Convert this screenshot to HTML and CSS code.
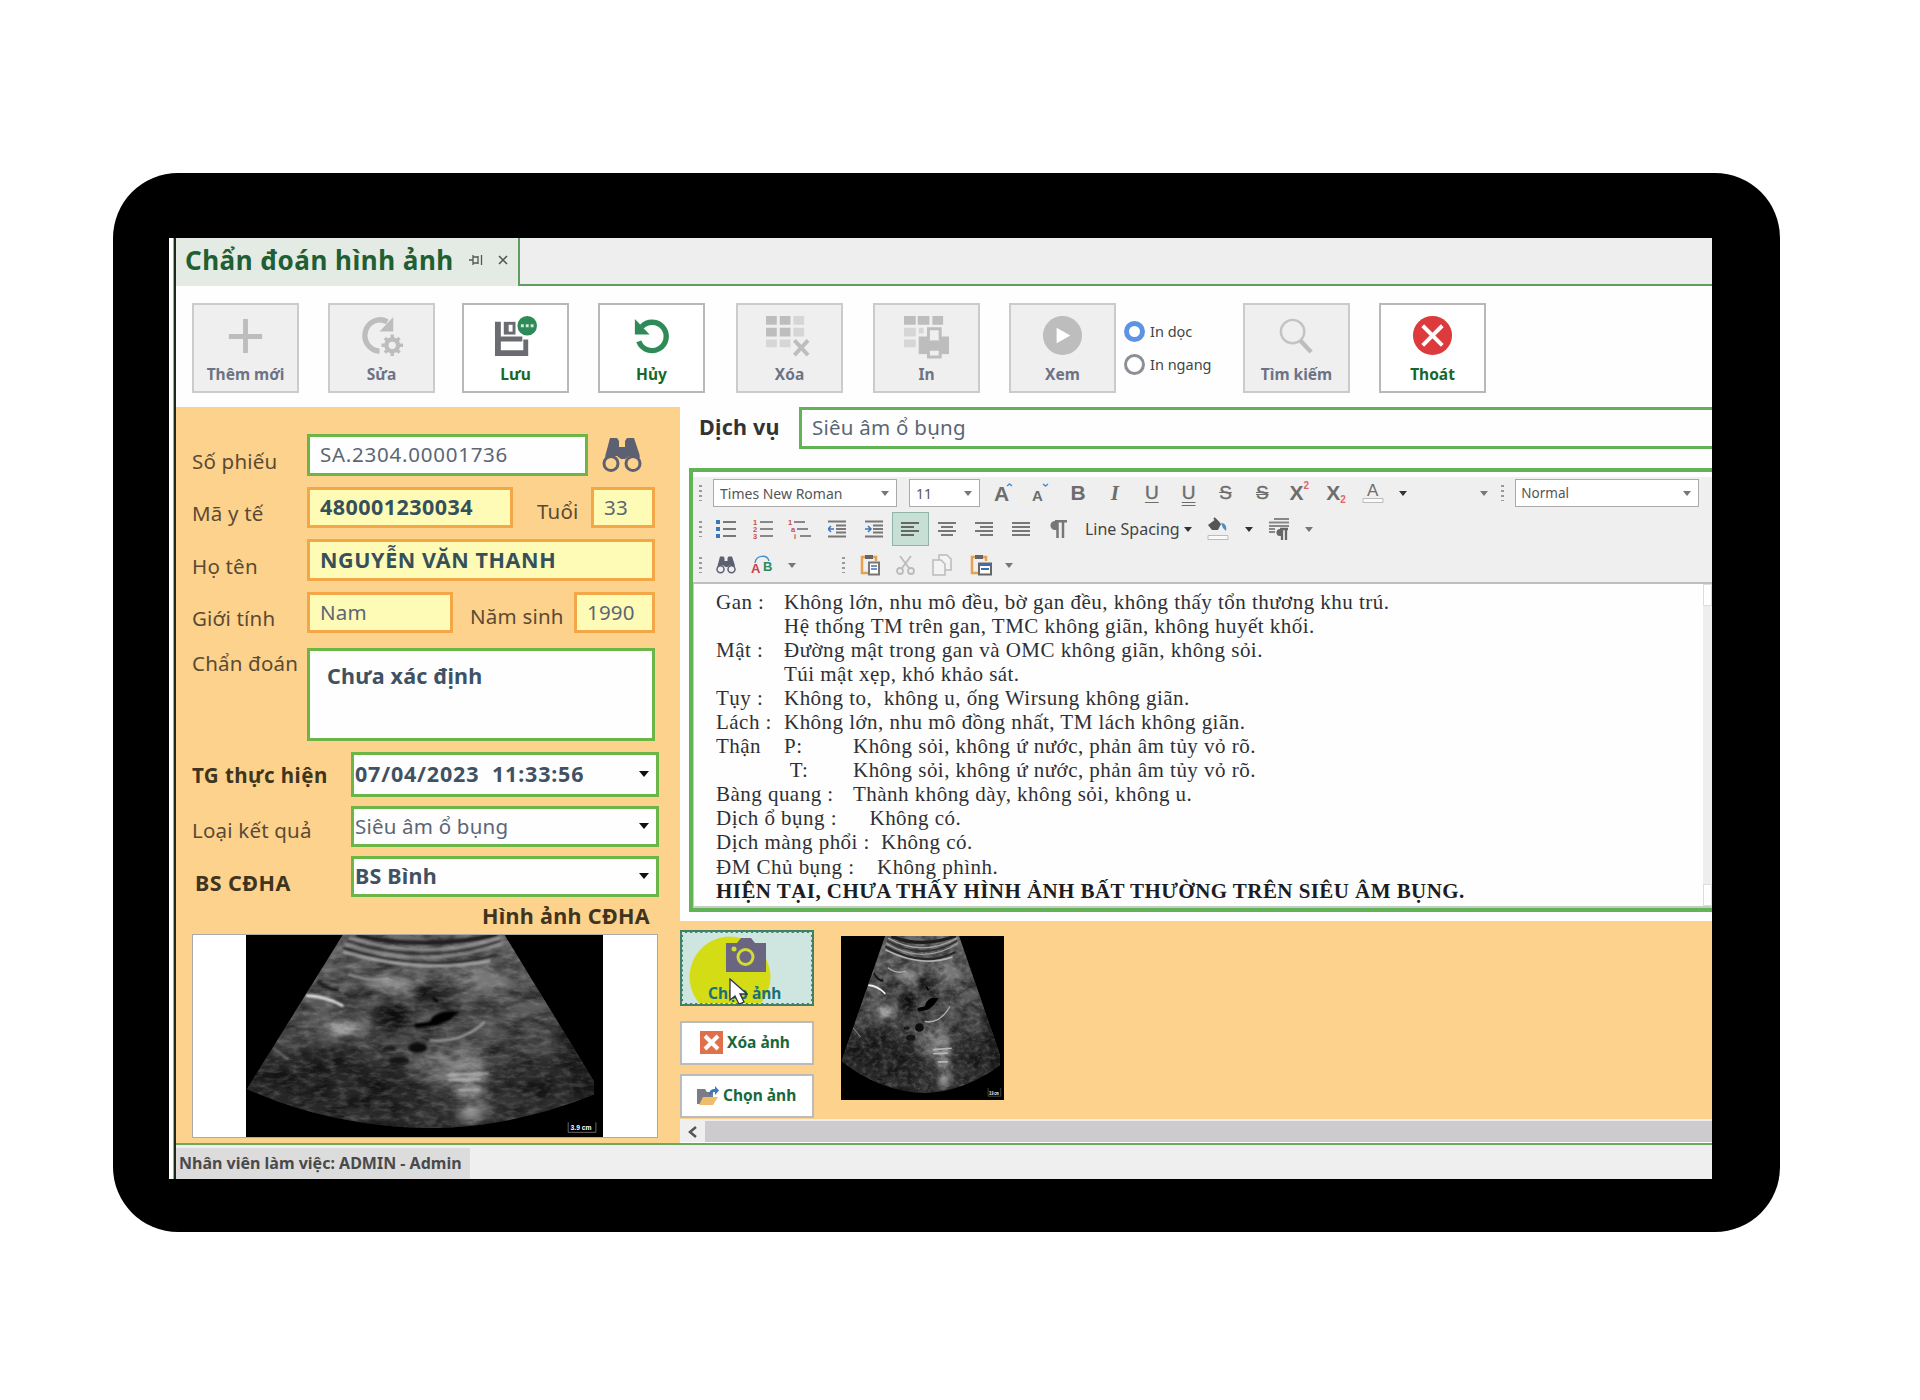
FILE: index.html
```html
<!DOCTYPE html>
<html lang="vi">
<head>
<meta charset="utf-8">
<title>Chẩn đoán hình ảnh</title>
<link rel="stylesheet" href="styles.css">
</head>
<body>
<svg class="defs" width="0" height="0">
  <defs>
    <filter id="soft" x="-50%" y="-50%" width="200%" height="200%"><feGaussianBlur stdDeviation="16"/></filter>
    <filter id="fine" x="-20%" y="-50%" width="140%" height="200%"><feGaussianBlur stdDeviation="2.500"/></filter>
    <filter id="speckle" x="0" y="0" width="100%" height="100%">
      <feTurbulence type="fractalNoise" baseFrequency="0.03 0.07" numOctaves="4" seed="8"/>
      <feColorMatrix values="0 0 0 0 0.6  0 0 0 0 0.6  0 0 0 0 0.6  2.4 0 0 0 -1"/>
    </filter>
    <filter id="shade" x="0" y="0" width="100%" height="100%">
      <feTurbulence type="fractalNoise" baseFrequency="0.012 0.025" numOctaves="4" seed="21"/>
      <feColorMatrix values="0 0 0 0 0  0 0 0 0 0  0 0 0 0 0  0 2.6 0 0 -1"/>
    </filter>
    <linearGradient id="depth" x1="0" y1="0" x2="0" y2="1">
      <stop offset="0" stop-color="#6a6a6a"/><stop offset=".45" stop-color="#545454"/><stop offset=".7" stop-color="#3a3a3a"/><stop offset="1" stop-color="#303030"/>
    </linearGradient>
    <clipPath id="fan"><path d="M286 0 L3 462 Q250 575 540 580 Q790 578 1030 478 L1030 440 L765 0Z"/></clipPath>
    <symbol id="scan" viewBox="0 0 1056 606" preserveAspectRatio="none">
      <rect width="1056" height="606" fill="#000"/>
      <g clip-path="url(#fan)">
        <rect width="1056" height="606" fill="url(#depth)"/>
        <g filter="url(#soft)">
          <ellipse cx="200" cy="440" rx="220" ry="100" fill="#262626"/>
          <ellipse cx="420" cy="470" rx="100" ry="90" fill="#262626"/>
          <ellipse cx="430" cy="150" rx="65" ry="32" fill="#8a8a8a"/>
          <ellipse cx="690" cy="130" rx="90" ry="40" fill="#777"/>
          <ellipse cx="430" cy="240" rx="60" ry="48" fill="#181818"/>
          <ellipse cx="560" cy="175" rx="80" ry="26" fill="#232323"/>
          <ellipse cx="350" cy="170" rx="30" ry="22" fill="#333"/>
          <ellipse cx="285" cy="282" rx="62" ry="22" fill="#b4b4b4"/>
          <ellipse cx="600" cy="390" rx="110" ry="60" fill="#7c7c7c"/>
          <ellipse cx="665" cy="470" rx="48" ry="95" fill="#929292"/>
          <ellipse cx="900" cy="440" rx="140" ry="80" fill="#2c2c2c"/>
          <ellipse cx="850" cy="240" rx="80" ry="60" fill="#5c5c5c"/>
          <path d="M880 60 L1060 480 L960 500Z" fill="#1c1c1c"/>
        </g>
        <rect width="1056" height="606" filter="url(#shade)" opacity=".5"/>
        <rect width="1056" height="606" filter="url(#speckle)" opacity=".22"/>
        <g filter="url(#fine)" fill="none" stroke-linecap="round">
          <path d="M330 2 Q530 46 740 0" stroke="#1c1c1c" stroke-width="12"/>
          <path d="M305 8 Q530 80 750 8" stroke="#a5a5a5" stroke-width="5"/>
          <path d="M300 18 Q530 94 752 18" stroke="#303030" stroke-width="6"/>
          <path d="M295 28 Q530 108 755 28" stroke="#a0a0a0" stroke-width="5"/>
          <path d="M290 40 Q530 120 740 60" stroke="#252525" stroke-width="8"/>
          <path d="M290 52 Q520 118 720 78" stroke="#b5b5b5" stroke-width="6"/>
          <path d="M305 118 Q360 142 420 130" stroke="#aaa" stroke-width="5"/>
          <path d="M180 182 Q240 185 285 212" stroke="#eee" stroke-width="8"/>
          <path d="M215 140 Q240 165 270 165" stroke="#181818" stroke-width="10"/>
          <path d="M545 316 Q640 325 705 262" stroke="#aaa" stroke-width="6"/>
          <path d="M600 420 L715 415 M600 435 L690 433 M630 465 L690 465" stroke="#b8b8b8" stroke-width="6"/>
          <path d="M500 268 L545 262 Q560 225 625 232 L600 254 L560 270 L505 276Z" fill="#000" stroke="#000" stroke-width="5"/>
          <path d="M555 190 l10 8" stroke="#000" stroke-width="9"/>
          <ellipse cx="508" cy="338" rx="28" ry="16" fill="#0a0a0a"/>
          <ellipse cx="452" cy="376" rx="30" ry="11" fill="#121212"/>
          <ellipse cx="425" cy="340" rx="20" ry="6" fill="#181818"/>
          <path d="M80 340 L125 372" stroke="#8a8a8a" stroke-width="4"/>
        </g>
      </g>
      <path d="M953 562v30h82v-30" fill="none" stroke="#999" stroke-width="2"/>
      <text x="960" y="586" class="scan-scale">3.9 cm</text>
    </symbol>
    <symbol id="binoc" viewBox="0 0 40 36">
      <path d="M8 1h7l2 3v6h6V4l2-3h7l5 15c1 3 1 4 0 6l-5-3h-5l-4 3h-4l-4-3H9l-5 4c-1-2-1-4 0-7z" fill="#5d6070"/>
      <circle cx="9" cy="26.500" r="7" fill="none" stroke="#5d6070" stroke-width="3"/>
      <circle cx="31" cy="26.500" r="7" fill="none" stroke="#5d6070" stroke-width="3"/>
    </symbol>
  </defs>
</svg>
<div class="tablet">
<div class="screen">
  <div class="edge"></div>
  <div class="app">
    <header class="tabs">
      <div class="tab"><span class="tab-title">Chẩn đoán hình ảnh</span>
        <svg width="14" height="12" viewBox="0 0 14 12" fill="none" stroke="#555" stroke-width="1.300"><path d="M0 6h4M4 1v10M4 3h5v6H4M9 2v8M12.500 1v10"/></svg>
        <svg width="10" height="10" viewBox="0 0 10 10" stroke="#555" stroke-width="1.600"><path d="M1 1l8 8M9 1l-8 8"/></svg>
      </div>
      <div class="tab-rest"></div>
    </header>

    <nav class="tools">
      <button class="tool off"><svg viewBox="0 0 44 44"><path d="M22 4v35M5 22h34" stroke="#bdbdbd" stroke-width="5"/></svg><span>Thêm mới</span></button>
      <button class="tool off t2"><svg viewBox="0 0 44 44"><path d="M28 7A15.500 16 0 1 0 20 37" fill="none" stroke="#bdbdbd" stroke-width="5.500"/><path d="M34 2v15H20z" fill="#bdbdbd"/><circle cx="33" cy="31" r="6" fill="none" stroke="#bdbdbd" stroke-width="4.500"/><path d="M33 20v5M33 37v5M22 31h5M39 31h5M25.500 23.500l3 3M37.500 35.500l3 3M40.500 23.500l-3 3M28.500 35.500l-3 3" stroke="#bdbdbd" stroke-width="3.500"/></svg><span>Sửa</span></button>
      <button class="tool on"><svg viewBox="0 0 44 44"><path d="M1 7h6v15h22v5H7v9h23V25h5v17H1z" fill="#6b6c72"/><path d="M10 7h12v13H10z" fill="#6b6c72"/><path d="M15 10h4v7h-4z" fill="#fff"/><circle cx="34" cy="11" r="11" fill="#fff"/><circle cx="34" cy="11" r="10" fill="#2e8b57"/><path d="M27.500 9.500h3v3h-3zM32.500 9.500h3v3h-3zM37.500 9.500h3v3h-3z" fill="#cfeadb"/></svg><span>Lưu</span></button>
      <button class="tool on t4"><svg viewBox="0 0 44 44"><path d="M12 12A14.500 14.500 0 1 1 9 27" fill="none" stroke="#2e8b57" stroke-width="5.500"/><path d="M5 4v16h15z" fill="#2e8b57"/></svg><span>Hủy</span></button>
      <button class="tool off t5"><svg viewBox="0 0 44 44"><path d="M-2 1H9v9H-2zM12 1h11v9H12zM-2 13H9v9H-2zM12 13h11v9H12z" fill="#bdbdbd"/><path d="M26 1h11v9H26zM26 13h11v9H26zM-2 25H9v8H-2zM12 25h11v8H12z" fill="#d6d6d6"/><path d="M27 26l14 15M41 26L27 41" stroke="#bdbdbd" stroke-width="4"/></svg><span>Xóa</span></button>
      <button class="tool off"><svg viewBox="0 0 44 44"><path d="M-1 1h12v9H-1zM13 1h12v9H13zM28 1h11v9H28z" fill="#bdbdbd"/><path d="M-1 13h12v9H-1zM-1 25h12v8H-1zM14 13h5v6h-5z" fill="#d6d6d6"/><path d="M14 22h31v18H14z" fill="#bdbdbd"/><path d="M24 26V14h12v12" fill="#efefef" stroke="#bdbdbd" stroke-width="3"/><path d="M24 35h12v8H24z" fill="#efefef" stroke="#bdbdbd" stroke-width="3"/></svg><span>In</span></button>
      <button class="tool off t7"><svg viewBox="0 0 44 44"><circle cx="22" cy="21" r="20" fill="#bdbdbd"/><path d="M16 13v16l14-8z" fill="#fff"/></svg><span>Xem</span></button>
      <div class="radios">
        <label><i class="radio checked"></i><span>In dọc</span></label>
        <label><i class="radio"></i><span>In ngang</span></label>
      </div>
      <button class="tool off"><svg viewBox="0 0 44 44"><circle cx="18" cy="17" r="12" fill="none" stroke="#c3c3c3" stroke-width="2.500"/><path d="M26 26l11 12" stroke="#bdbdbd" stroke-width="4.500"/></svg><span>Tìm kiếm</span></button>
      <button class="tool on"><svg viewBox="0 0 44 44"><circle cx="22" cy="21" r="20" fill="#dc3a3c"/><path d="M12 11l20 20M32 11L12 31" stroke="#fff" stroke-width="4"/></svg><span>Thoát</span></button>
    </nav>

    <main class="work">
      <section class="patient">
        <div class="row r1"><label class="lbl"><span>Số phiếu</span></label><div class="box green w281"><span class="code">SA.2304.00001736</span></div><svg class="find" width="40" height="36"><use href="#binoc"/></svg></div>
        <div class="row r2"><label class="lbl"><span>Mã y tế</span></label><div class="box gold b w206"><span class="med">480001230034</span></div><label class="mid m1"><span>Tuổi</span></label><div class="box gold w64"><span>33</span></div></div>
        <div class="row r3"><label class="lbl"><span>Họ tên</span></label><div class="box gold b w348"><span class="name">NGUYỄN VĂN THANH</span></div></div>
        <div class="row r4"><label class="lbl"><span>Giới tính</span></label><div class="box gold w146"><span>Nam</span></div><label class="mid m2"><span>Năm sinh</span></label><div class="box gold w81"><span>1990</span></div></div>
        <div class="row r5"><label class="lbl"><span>Chẩn đoán</span></label><div class="box green note w348"><span>Chưa xác định</span></div></div>
        <div class="row r6"><label class="lbl2 b"><span>TG thực hiện</span></label><div class="box green combo date"><span>07/04/2023&nbsp; 11:33:56</span><i class="caret"></i></div></div>
        <div class="row r7"><label class="lbl2"><span>Loại kết quả</span></label><div class="box green combo"><span>Siêu âm ổ bụng</span><i class="caret"></i></div></div>
        <div class="row r8"><label class="lbl2 b"><span>BS CĐHA</span></label><div class="box green combo bb"><span>BS Bình</span><i class="caret"></i></div></div>
        <div class="caption"><span>Hình ảnh CĐHA</span></div>
        <div class="preview"><svg width="357" height="202"><use href="#scan" width="357" height="202"/></svg></div>
      </section>

      <section class="result">
        <div class="service"><label><span>Dịch vụ</span></label><div class="service-box"><span>Siêu âm ổ bụng</span></div></div>
        <div class="editor">
          <div class="bars">
            <div class="bar bar1">
              <i class="grip"></i>
              <div class="sel"><span>Times New Roman</span><i class="caret sm"></i></div>
              <div class="sel s2"><span>11</span><i class="caret sm"></i></div>
              <div class="g"><svg width="20" height="22"><text x="0" y="19" class="gl">A</text><path d="M13 4l2.500-2 2.500 2" stroke="#4a8ec6" fill="none" stroke-width="1.500"/></svg></div>
              <div class="g"><svg width="18" height="22"><text x="0" y="19" class="gl sml">A</text><path d="M11 2l2.500 2 2.500-2" stroke="#4a8ec6" fill="none" stroke-width="1.500"/></svg></div>
              <div class="g gl">B</div>
              <div class="g gl it">I</div>
              <div class="g gl rg un">U</div>
              <div class="g gl rg un dbl">U</div>
              <div class="g gl rg st">S</div>
              <div class="g gl rg st dbl2">S</div>
              <div class="g gl xx">X<sup>2</sup></div>
              <div class="g gl xx">X<sub>2</sub></div>
              <div class="g"><svg width="22" height="24"><text x="5" y="15" class="gl fc">A</text><path d="M1 17.500h20v4H1z" fill="#fafafa" stroke="#bbb"/></svg></div>
              <div class="g"><i class="caret sm dk"></i></div>
              <div class="g end"><i class="caret sm"></i></div>
              <i class="grip"></i>
              <div class="sel s3"><span>Normal</span><i class="caret sm"></i></div>
            </div>
            <div class="bar bar2">
              <i class="grip"></i>
              <div class="g"><svg width="20" height="18"><path d="M0 2h4M0 9h4M0 16h4" stroke="#3c78b8" stroke-width="4"/><path d="M7 2h13M7 9h13M7 16h13" stroke="#777" stroke-width="2"/></svg></div>
              <div class="g"><svg width="20" height="20"><text x="0" y="6" class="nm">1</text><text x="0" y="13" class="nm">2</text><text x="0" y="20" class="nm">3</text><path d="M7 3h13M7 10h13M7 17h13" stroke="#888" stroke-width="2"/></svg></div>
              <div class="g"><svg width="23" height="20"><text x="0" y="6" class="nm">1</text><text x="3" y="13" class="nm">a</text><text x="6" y="20" class="nm">i</text><path d="M6 3h11M9 10h11M12 17h11" stroke="#888" stroke-width="2"/></svg></div>
              <div class="g"><svg width="18" height="18"><path d="M0 1.500h18M8 5.500h10M8 9h10M8 12.500h10M0 16.500h18" stroke="#777" stroke-width="2"/><path d="M0 9h6M3 6L0 9l3 3" stroke="#3c78b8" stroke-width="1.500" fill="none"/></svg></div>
              <div class="g"><svg width="18" height="18"><path d="M0 1.500h18M8 5.500h10M8 9h10M8 12.500h10M0 16.500h18" stroke="#777" stroke-width="2"/><path d="M0 9h6M3 6l3 3-3 3" stroke="#3c78b8" stroke-width="1.500" fill="none"/></svg></div>
              <div class="g act"><svg width="18" height="14"><path d="M0 1h18M0 5h13M0 9h18M0 13h13" stroke="#666" stroke-width="2"/></svg></div>
              <div class="g"><svg width="18" height="14"><path d="M0 1h18M3 5h12M0 9h18M3 13h12" stroke="#777" stroke-width="2"/></svg></div>
              <div class="g"><svg width="18" height="14"><path d="M0 1h18M5 5h13M0 9h18M5 13h13" stroke="#777" stroke-width="2"/></svg></div>
              <div class="g"><svg width="18" height="14"><path d="M0 1h18M0 5h18M0 9h18M0 13h18" stroke="#777" stroke-width="2"/></svg></div>
              <div class="g"><svg width="18" height="18"><path d="M8 1h-2a4.500 4.500 0 0 0 0 9h2z" fill="#777"/><path d="M18 1.200H6M8.500 1v17M14 1v17" fill="none" stroke="#777" stroke-width="2.500"/></svg></div>
              <div class="ls"><span>Line Spacing</span><i class="caret sm dk"></i></div>
              <div class="g"><svg width="22" height="24"><path d="M1 8l8-6 5 5-3 6H5z" fill="#555"/><path d="M7 1l5 5" stroke="#555" stroke-width="2"/><path d="M14 6c4 0 6 3 5 8l-3-3z" fill="#4a8ec6"/><path d="M1 18.500h20v4H1z" fill="#fafafa" stroke="#bbb"/></svg></div>
              <div class="g"><i class="caret sm dk"></i></div>
              <div class="g"><svg width="20" height="22"><path d="M5 1h15M0 4.500h20M0 8h20M0 11h6M0 14h6" stroke="#888" stroke-width="2"/><path d="M13 11h-2a3.500 3.500 0 0 0 0 7h2z" fill="#666"/><path d="M19 11h-8M13 11v11M17 11v11" fill="none" stroke="#666" stroke-width="2.300"/></svg></div>
              <div class="g"><i class="caret sm"></i></div>
            </div>
            <div class="bar bar3">
              <i class="grip"></i>
              <div class="g"><svg width="20" height="18"><use href="#binoc"/></svg></div>
              <div class="g"><svg width="22" height="20"><text x="0" y="18" class="ab ra">A</text><text x="12" y="16" class="ab gb">B</text><path d="M4 8c1-8 12-9 14-2" fill="none" stroke="#4a8ec6" stroke-width="1.500"/></svg></div>
              <div class="g"><i class="caret sm"></i></div>
              <i class="grip"></i>
              <div class="g"><svg width="20" height="22"><path d="M8 19H2V3h14v4" fill="none" stroke="#e8a04a" stroke-width="2.500"/><path d="M5 1h8v4H5z" fill="#666"/><path d="M9 8.500h10v12H9z" fill="#fff" stroke="#777" stroke-width="2"/><path d="M11 12h6M11 15h6" stroke="#4a6ea6" stroke-width="1.500"/></svg></div>
              <div class="g"><svg width="20" height="20" fill="none" stroke="#bbb" stroke-width="1.800"><circle cx="4" cy="16" r="3"/><circle cx="15" cy="16" r="3"/><path d="M6 13L15 1M13 13L4 1"/></svg></div>
              <div class="g"><svg width="20" height="22" fill="#f3f3f3" stroke="#bbb" stroke-width="1.500"><path d="M7 1h8l4 4v11H7z"/><path d="M1 6h8l4 4v11H1z"/></svg></div>
              <div class="g"><svg width="22" height="22"><path d="M8 19H2V3h14v4" fill="none" stroke="#e8a04a" stroke-width="2.500"/><path d="M5 1h8v4H5z" fill="#666"/><path d="M9 9.500h12v11H9z" fill="#fff" stroke="#666" stroke-width="2"/><path d="M9 11h12M11 15h8" stroke="#3f6ea8" stroke-width="2"/></svg></div>
              <div class="g"><i class="caret sm"></i></div>
            </div>
          </div>
          <div class="page">
            <div class="text">
              <p><span class="c1">Gan :</span>Không lớn, nhu mô đều, bờ gan đều, không thấy tổn thương khu trú.</p>
              <p><span class="c1"></span>Hệ thống TM trên gan, TMC không giãn, không huyết khối.</p>
              <p><span class="c1">Mật :</span>Đường mật trong gan và OMC không giãn, không sỏi.</p>
              <p><span class="c1"></span>Túi mật xẹp, khó khảo sát.</p>
              <p><span class="c1">Tụy :</span>Không to,&nbsp; không u, ống Wirsung không giãn.</p>
              <p><span class="c1">Lách :</span>Không lớn, nhu mô đồng nhất, TM lách không giãn.</p>
              <p><span class="c1">Thận</span><span class="c2">P:</span>Không sỏi, không ứ nước, phản âm tủy vỏ rõ.</p>
              <p><span class="c1"></span><span class="c2">&nbsp;T:</span>Không sỏi, không ứ nước, phản âm tủy vỏ rõ.</p>
              <p><span class="c3">Bàng quang :</span>Thành không dày, không sỏi, không u.</p>
              <p><span class="c4">Dịch ổ bụng :</span>Không có.</p>
              <p><span class="c5">Dịch màng phổi :</span>Không có.</p>
              <p><span class="c6">ĐM Chủ bụng :</span>Không phình.</p>
              <p class="concl">HIỆN TẠI, CHƯA THẤY HÌNH ẢNH BẤT THƯỜNG TRÊN SIÊU ÂM BỤNG.</p>
            </div>
            <div class="vscroll"><i></i><i></i></div>
          </div>
        </div>
        <div class="gallery">
          <div class="acts">
            <button class="shoot">
              <i class="halo"></i>
              <svg class="cam" width="41" height="34"><path d="M1 5h11l4-5h10l4 5h11v29H1z" fill="#6a6580"/><circle cx="20.500" cy="19" r="7.500" fill="none" stroke="#d3dc30" stroke-width="3"/><circle cx="9" cy="11" r="2.500" fill="#d3dc30"/></svg>
              <span>Chụp ảnh</span>
              <svg class="pointer" width="19" height="28"><path d="M1 1v21l5-4 4 8 5-2-4-8h7z" fill="#fff" stroke="#334" stroke-width="1.300"/></svg>
            </button>
            <button class="act-btn del"><svg width="23" height="23"><path d="M0 0h23v23H0z" fill="#e0704c"/><path d="M5 5l13 13M18 5L5 18" stroke="#fff" stroke-width="4"/></svg><span>Xóa ảnh</span></button>
            <button class="act-btn pick"><svg width="22" height="21"><path d="M0 4h8l2 3h6v12H0z" fill="#7b7c85"/><path d="M6 12h15l-5 8H2z" fill="#edbd6c"/><path d="M12 10c0-5 3-6 6-6V1l4 4.500L18 10V7c-3 0-4 1-4 3z" fill="#3c78c0"/></svg><span>Chọn ảnh</span></button>
          </div>
          <svg class="thumb" width="163" height="164"><use href="#scan" width="163" height="164"/></svg>
        </div>
        <div class="hscroll"><i><svg width="9" height="12"><path d="M8 1L2 6l6 5" fill="none" stroke="#555" stroke-width="2.500"/></svg></i></div>
      </section>
    </main>
    <footer class="status"><span class="who">Nhân viên làm việc: ADMIN - Admin</span></footer>
  </div>
</div>
</div>
</body>
</html>
```
FILE: styles.css
```css
* { box-sizing: border-box; }
body { margin: 0; width: 1920px; height: 1400px; overflow: hidden; background: #fff; font-family: "Noto Sans", "Open Sans", sans-serif; padding: 173px 0 0 113px; }
button { font: inherit; padding: 0; margin: 0; }
svg { display: block; flex: none; }
.defs { position: absolute; }
.b, .b span { font-weight: 700; }

.tablet { width: 1667px; height: 1059px; background: #000; border-radius: 65px; padding: 65px 68px 53px 56px; }
.screen { width: 1543px; height: 941px; background: #fff; display: flex; overflow: hidden; }
.edge { width: 7px; flex: none; background: linear-gradient(90deg, #fff 4px, #7ec46e 4px, #7ec46e 5px, #1d2b1d 5px); }
.app { flex: 1; min-width: 0; display: flex; flex-direction: column; }

.tabs { display: flex; height: 48px; flex: none; }
.tab { width: 344px; background: #e4ebe4; border-right: 2px solid #5f9e5f; display: flex; align-items: center; padding: 0 0 4px 9px; }
.tab svg:first-of-type { margin-left: 15px; }
.tab svg + svg { margin-left: 15px; }
.tab-title { font-size: 26px; line-height: 34px; font-weight: 700; color: #1f5f33; white-space: nowrap; letter-spacing: .5px; }
.tab-rest { flex: 1; background: #eee; border-bottom: 2px solid #5f9e5f; }

.tools { display: flex; height: 121px; flex: none; padding: 17px 0 0 16px; background: #fefefe; }
.tool { width: 107px; height: 90px; border: 2px solid #cbcbcb; display: flex; flex-direction: column; align-items: center; padding-top: 10px; margin-right: 29px; flex: none; border-radius: 0; }
.t2 { margin-right: 27px; }
.t4 { margin-right: 31px; }
.t5 { margin-right: 30px; }
.t7 { margin-right: 8px; }
.tool svg { width: 43px; height: 43px; overflow: visible; }
.tool span { font-size: 15.500px; line-height: 22px; font-weight: 700; margin-top: 5px; white-space: nowrap; }
.tool.off { background: #efefef; color: #6d7384; }
.tool.on { background: #fff; color: #15682a; border-color: #b8b8b8; }
.radios { width: 119px; padding-top: 17px; flex: none; }
.radios label { display: flex; align-items: center; height: 22px; margin-bottom: 11px; font-size: 14.500px; gap: 5px; color: #444; white-space: nowrap; }
.radio { width: 21px; height: 21px; border: 3px solid #8b8f96; border-radius: 50%; background: #fff; flex: none; }
.radio.checked { border: 5px solid #5d93e4; }

.work { display: flex; flex: 1; min-height: 0; }
.patient { width: 504px; flex: none; background: #fdd28c; padding: 27px 0 0 16px; color: #5a4a33; font-size: 20.500px; letter-spacing: .2px; }
.row { display: flex; align-items: center; }
.row span, .caption span { white-space: nowrap; }
.r1 { height: 42px; margin-bottom: 11px; }
.r2 { height: 41px; margin-bottom: 11px; }
.r3 { height: 42px; margin-bottom: 11px; }
.r4 { height: 41px; margin-bottom: 15px; }
.r5 { height: 93px; margin-bottom: 11px; align-items: flex-start; }
.r6 { height: 45px; margin-bottom: 9px; }
.r7 { height: 41px; margin-bottom: 9px; }
.r8 { height: 41px; }
.lbl { width: 115px; padding-top: 11px; flex: none; }
.r5 .lbl { padding-top: 1px; }
.lbl2 { width: 159px; flex: none; }
.lbl2.b { color: #40341f; letter-spacing: .45px; }
.r7 .lbl2 { padding-top: 7px; }
.r8 .lbl2 { padding: 12px 0 0 3px; font-size: 21.500px; }
.mid { padding-top: 7px; flex: none; }
.m1 { width: 78px; padding-left: 24px; }
.m2 { width: 121px; padding-left: 17px; }
.box { height: 100%; display: flex; align-items: center; border: 3px solid #6cb548; background: #fefefe; padding: 0 0 2px 10px; color: #5b6675; flex: none; }
.box.b, .box.bb, .note, .date { font-size: 21.500px; font-weight: 700; color: #3f5264; }
.box.gold { border-color: #f4a747; background: #fefbb6; }
.box.gold.b { color: #35505a; }
.code { letter-spacing: .75px; }
.med { letter-spacing: .45px; }
.name { letter-spacing: .6px; }
.date span { letter-spacing: .8px; }
.w281 { width: 281px; } .w206 { width: 206px; } .w64 { width: 64px; } .w348 { width: 348px; } .w146 { width: 146px; } .w81 { width: 81px; }
.note { align-items: flex-start; padding: 10px 0 0 17px; }
.combo { width: 308px; padding-left: 1px; justify-content: space-between; padding-right: 7px; }
.find { margin-left: 14px; }
.caret { border: 5.500px solid transparent; border-top: 6px solid #111; border-bottom: 0; flex: none; }
.caret.sm { border-width: 4px; border-top: 5px solid #777; border-bottom: 0; }
.caret.sm.dk { border-top-color: #333; }
.caption { height: 37px; width: 458px; text-align: right; font-size: 21.500px; letter-spacing: .33px; font-weight: 700; color: #40341f; line-height: 37px; }
.preview { width: 466px; height: 204px; background: #fff; border: 1px solid #aaa; padding-left: 53px; }
.scan-scale { font: bold 20px "Liberation Sans", sans-serif; fill: #fff; letter-spacing: 0; }

.result { flex: 1; min-width: 0; display: flex; flex-direction: column; background: #fefefe; }
.service { display: flex; height: 42px; flex: none; font-size: 20.500px; letter-spacing: .25px; }
.service label { width: 119px; padding-left: 19px; font-size: 21.500px; font-weight: 700; color: #333; line-height: 40px; white-space: nowrap; }
.service-box { flex: 1; border: 3px solid #62b355; border-right: 0; padding-left: 10px; line-height: 34px; color: #5b6675; }
.editor { margin: 19px 0 0 9px; height: 444px; flex: none; border: 4px solid #62b355; border-right: 0; padding-top: 5px; display: flex; flex-direction: column; }
.bars { background: #efefef; height: 107px; flex: none; padding-top: 2px; border-bottom: 2px solid #bfbfbf; }
.bar { display: grid; align-items: center; height: 36px; }
.bar1 { height: 28px; margin-bottom: 5px; grid-template-columns: 20px 184px 12px 71px 6px repeat(11, 36.850px) 24px 80px 20px 184px; }
.bar1 .sel { grid-column: 2; }
.bar1 .s2 { grid-column: 4; }
.bar1 .s2 + .g { grid-column: 6; }
.bar1 .s3 { grid-column: 20; }
.bar2 { height: 34px; grid-template-columns: 15px repeat(10, 36.800px) 124px 37px 24px 36px 24px; }
.bar3 { height: 38px; grid-template-columns: 15px 36px 36px 24px 47.500px 36px 36px 36px 42px 15px; }
.grip { width: 3px; height: 16px; margin-left: 6px; background: repeating-linear-gradient(#999 0 2px, transparent 2px 5px); }
.bar3 .grip ~ .grip { margin-left: 38px; }
.sel { height: 28px; background: #fff; border: 1.500px solid #aaa; display: flex; align-items: center; justify-content: space-between; padding: 0 7px 0 6px; font-size: 14px; color: #555; white-space: nowrap; }
.s3 { font-size: 13.500px; padding-left: 5px; }
.g { display: flex; align-items: center; justify-content: center; height: 100%; white-space: nowrap; }
.g.end { justify-content: flex-end; padding-right: 7px; }
.act { background: #c8dfd6; border: 1px solid #8fb5a6; }
.gl { font-family: "Liberation Sans", sans-serif; font-weight: 700; font-size: 21px; color: #6d6d6d; fill: #6d6d6d; line-height: 22px; }
.gl.sml { font-size: 15px; }
.gl.fc { font-size: 17px; font-weight: 400; }
.gl.it { font-family: "Liberation Serif", serif; font-style: italic; }
.gl.rg { font-weight: 400; font-size: 19px; -webkit-text-stroke: .4px #6d6d6d; }
.gl.un { text-decoration: underline; text-underline-offset: 3px; }
.gl.un.dbl { text-decoration-style: double; }
.gl.st { text-decoration: line-through; }
.gl.st.dbl2 { text-decoration-style: double; }
.xx sup, .xx sub { font-size: 10px; color: #d66; line-height: 8px; }
.xx sup { margin-top: -14px; }
.xx sub { margin-top: 14px; }
.nm { font: bold 7.500px "Liberation Sans", sans-serif; fill: #cc4a4a; }
.ab { font: bold 13px "Liberation Sans", sans-serif; }
.ra { fill: #c8404a; } .gb { fill: #2f8a5a; }
.ls { display: flex; align-items: center; gap: 4px; padding-left: 9px; font-size: 16px; color: #444; white-space: nowrap; }
.page { flex: 1; display: flex; border-bottom: 2px solid #c5ccc5; border-left: 1px solid #ccc; min-height: 0; }
.text { flex: 1; padding: 6px 0 0 22px; font: 21px/24.050px "Liberation Serif", serif; letter-spacing: .47px; color: #2e3035; white-space: nowrap; }
.text p { margin: 0; height: 24.050px; display: flex; }
.c1 { width: 68px; } .c2 { width: 69px; } .c3 { width: 137px; } .c4 { width: 153.500px; } .c5 { width: 165px; } .c6 { width: 161px; }
.concl { font-weight: 700; color: #1c1c22; letter-spacing: .44px; }
.vscroll { width: 9px; background: #eee; display: flex; flex-direction: column; justify-content: space-between; }
.vscroll i { height: 22px; background: #fff; border: 1px solid #ddd; }
.gallery { margin-top: 9px; height: 198px; flex: none; background: #fdd28c; display: flex; }
.acts { width: 134px; padding-top: 9px; }
.shoot { position: relative; display: block; width: 134px; height: 76px; background: #cfe6e0; border: 3px solid #3f8068; outline: 1.500px dashed #cfe6e0; outline-offset: -3px; }
.halo { position: absolute; left: 6px; top: 3px; width: 82px; height: 67px; background: radial-gradient(circle 41px at 41px 41px, #d3dc14 97%, transparent 100%); }
.cam { position: absolute; left: 42px; top: 5px; }
.shoot span, .act-btn span { font-size: 15.500px; font-weight: 700; color: #17683a; white-space: nowrap; }
.shoot span { position: absolute; left: 25px; top: 50px; line-height: 20px; color: #1a6f78; }
.pointer { position: absolute; left: 46px; top: 45px; }
.act-btn { display: flex; align-items: center; gap: 4px; width: 134px; height: 44px; background: #fff; border: 2px solid #bbb; margin-top: 15px; padding-bottom: 2px; }
.act-btn + .act-btn { margin-top: 9px; }
.del { padding-left: 18px; }
.pick { padding-left: 15px; }
.thumb { margin: 15px 0 0 27px; }
.hscroll { height: 23px; flex: none; background: #cdcbcd; border-top: 2px solid #eee; }
.hscroll i { display: flex; width: 25px; height: 21px; background: #efefef; align-items: center; justify-content: center; }
.status { height: 36px; flex: none; border-top: 2px solid #6fa85f; background: #efefef; padding-top: 3px; }
.who { display: block; width: 294px; height: 31px; background: #dcdcdc; padding-left: 3px; font-size: 16px; line-height: 31px; font-weight: 700; color: #4a4a4a; white-space: nowrap; }
```
